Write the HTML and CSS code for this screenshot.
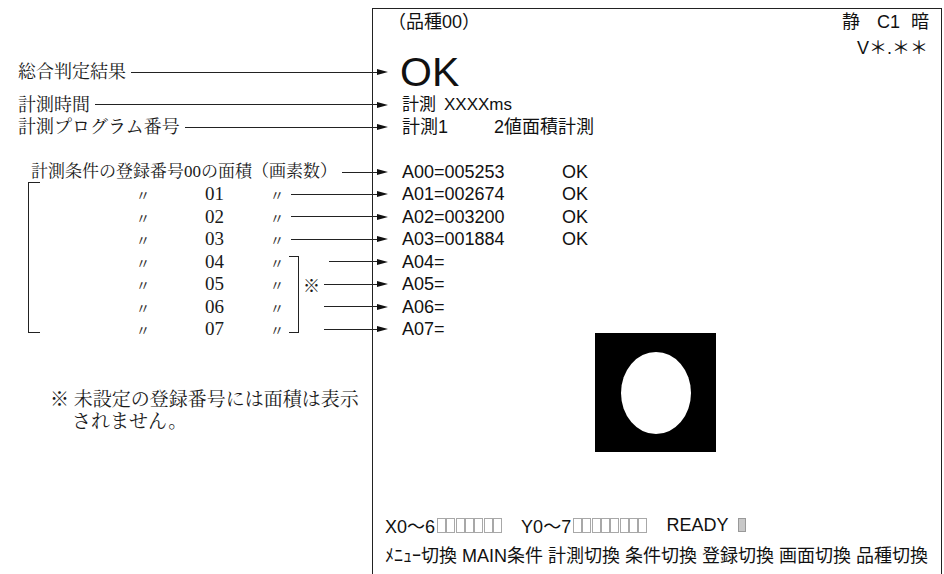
FILE: index.html
```html
<!DOCTYPE html>
<html lang="ja">
<head>
<meta charset="utf-8">
<title>計測画面</title>
<link rel="stylesheet" href="styles.css">
</head>
<body>
<div class="page">
  <div class="notes">
    <div class="lrow r-ok"><span>総合判定結果</span><i class="lead"></i></div>
    <div class="lrow r-time"><span>計測時間</span><i class="lead"></i></div>
    <div class="lrow r-prog"><span>計測プログラム番号</span><i class="lead"></i></div>
    <div class="lrow r-a00"><span>計測条件の登録番号00の面積（画素数）</span><i class="lead"></i></div>
    <div class="grp">
      <div class="crow"><span class="dit">〃</span><span class="num">01</span><span class="dit">〃</span><span class="tail"><i class="lead"></i></span></div>
      <div class="crow"><span class="dit">〃</span><span class="num">02</span><span class="dit">〃</span><span class="tail"><i class="lead"></i></span></div>
      <div class="crow"><span class="dit">〃</span><span class="num">03</span><span class="dit">〃</span><span class="tail"><i class="lead"></i></span></div>
      <div class="grp2">
        <div class="crow"><span class="dit">〃</span><span class="num">04</span><span class="dit">〃</span><span class="tail t04"><i class="lead"></i></span></div>
        <div class="crow"><span class="dit">〃</span><span class="num">05</span><span class="dit">〃</span><span class="tail t05"><span class="kome">※</span><i class="lead"></i></span></div>
        <div class="crow"><span class="dit">〃</span><span class="num">06</span><span class="dit">〃</span><span class="tail t06"><i class="lead"></i></span></div>
        <div class="crow"><span class="dit">〃</span><span class="num">07</span><span class="dit">〃</span><span class="tail t06"><i class="lead"></i></span></div>
      </div>
    </div>
    <p class="foot">※ 未設定の登録番号には面積は表示<br><span class="foot2">されません。</span></p>
  </div>

  <div class="screen">
    <div class="srow hdr"><span class="kind">（品種00）</span><span class="mode"><span>静</span><span class="c1">C1</span><span class="dark">暗</span></span></div>
    <div class="srow hdr ver"><span>V＊.＊＊</span></div>
    <div class="srow s-ok"><i class="arr"></i><span class="big">OK</span></div>
    <div class="srow s-time"><i class="arr"></i><span>計測</span><span class="ms">XXXXms</span></div>
    <div class="srow s-prog"><i class="arr"></i><span class="pno">計測1</span><span>2値面積計測</span></div>
    <div class="srow s-a00"><i class="arr"></i><span class="val">A00=005253</span><span>OK</span></div>
    <div class="srow s-a"><i class="arr"></i><span class="val">A01=002674</span><span>OK</span></div>
    <div class="srow s-a"><i class="arr"></i><span class="val">A02=003200</span><span>OK</span></div>
    <div class="srow s-a"><i class="arr"></i><span class="val">A03=001884</span><span>OK</span></div>
    <div class="srow s-a"><i class="arr"></i><span class="val">A04=</span></div>
    <div class="srow s-a"><i class="arr"></i><span class="val">A05=</span></div>
    <div class="srow s-a"><i class="arr"></i><span class="val">A06=</span></div>
    <div class="srow s-a"><i class="arr"></i><span class="val">A07=</span></div>
    <div class="img"><div class="blob"></div></div>
    <div class="status">
      <span>X0〜6</span>
      <span class="boxes"><i></i><i></i><i></i><i></i><i></i><i></i><i></i></span>
      <span class="ylbl">Y0〜7</span>
      <span class="boxes"><i></i><i></i><i></i><i></i><i></i><i></i><i></i><i></i></span>
      <span class="ready">READY</span>
      <i class="led"></i>
    </div>
    <div class="menu">ﾒﾆｭｰ切換 MAIN条件 計測切換 条件切換 登録切換 画面切換 品種切換</div>
  </div>
</div>
</body>
</html>
```

FILE: styles.css
```css
* { box-sizing: border-box; margin: 0; padding: 0; }
html, body { width: 944px; height: 574px; overflow: hidden; background: #fff; }
body { color: #111; }

.page { display: flex; width: 944px; height: 574px; }

/* ---------- left annotation column ---------- */
.notes {
  width: 372px;
  flex: none;
  padding-top: 61px;
  font-family: "Liberation Serif", "Noto Serif CJK JP", "Noto Sans CJK JP", serif;
  font-size: 18px;
  color: #1a1a1a;
}
.lrow {
  display: flex;
  align-items: center;
  height: 22px;
  line-height: 22px;
  padding-left: 18px;
  white-space: nowrap;
}
.lead { display: block; flex: 1; height: 1px; background: #222; margin-left: 5px; }
.r-time { margin-top: 10px; height: 23px; }
.r-a00 { margin-top: 23px; padding-left: 31px; font-size: 17px; }

.grp { position: relative; }
.grp::before {
  content: "";
  position: absolute;
  left: 28px; top: -1px; bottom: 7.5px;
  width: 11px;
  border: 1px solid #222;
  border-right: none;
}
.grp2 { position: relative; }
.grp2::before {
  content: "";
  position: absolute;
  left: 289px; top: 5.5px; bottom: 7.5px;
  width: 9px;
  border: 1px solid #222;
  border-left: none;
}
.crow {
  display: grid;
  grid-template-columns: 69px 65px 21px 1fr;
  align-items: center;
  height: 22.5px;
  line-height: 22px;
  padding-left: 136px;
  white-space: nowrap;
}
.dit { font-family: "Noto Sans CJK JP", sans-serif; font-size: 14px; color: #333; }
.num { font-size: 19px; }
.tail { display: flex; align-items: center; height: 100%; }
.tail .lead { margin-left: 0; }
.t04 { padding-left: 38px; }
.t05 { padding-left: 12px; }
.t06 { padding-left: 33px; }
.kome { font-size: 17px; margin-right: 4px; margin-top: 5px; line-height: 17px; }

.foot {
  margin-top: 48px;
  padding-left: 50px;
  font-size: 19px;
  line-height: 22px;
  white-space: nowrap;
}
.foot2 { padding-left: 22px; }

/* ---------- right: the screen ---------- */
.screen {
  width: 570px;
  height: 566px;
  margin-top: 8px;
  flex: none;
  border: 1px solid #222;
  border-bottom: none;
  display: flex;
  flex-direction: column;
  font-family: "Liberation Sans", "Noto Sans CJK JP", sans-serif;
  font-size: 18px;
  color: #111;
  padding-bottom: 7px;
}
.srow {
  display: flex;
  align-items: center;
  height: 22px;
  line-height: 22px;
  white-space: nowrap;
  flex: none;
}
.hdr { height: 26px; justify-content: space-between; padding: 0 12px 0 15px; }
.ver { justify-content: flex-end; padding-right: 13px; }
.mode { display: flex; }
.c1 { margin-left: 17px; }
.dark { margin-left: 11px; }

.arr { display: flex; align-items: center; width: 15px; flex: none; margin-right: 14px; }
.arr::before { content: ""; width: 4px; height: 1px; background: #222; }
.arr::after {
  content: "";
  border-left: 11px solid #111;
  border-top: 3.5px solid transparent;
  border-bottom: 3.5px solid transparent;
}
.big { font-size: 41px; line-height: 22px; margin-left: -2px; }
.s-time { margin-top: 10px; height: 23px; font-size: 17px; }
.ms { margin-left: 8px; }
.pno { width: 92px; }
.s-a00 { margin-top: 23px; }
.s-a { height: 22.5px; }
.val { width: 160px; }

.img {
  width: 121px;
  height: 119px;
  margin-top: -7.5px;
  margin-left: 222px;
  background: #000;
  display: flex;
  align-items: center;
  justify-content: center;
  flex: none;
}
.blob { width: 70px; height: 82px; border-radius: 50%; background: #fff; }

.status {
  margin-top: auto;
  display: flex;
  align-items: center;
  height: 22px;
  padding-left: 12px;
  white-space: nowrap;
}
.boxes { display: flex; margin-left: 2px; }
.boxes i { display: block; width: 9px; height: 15px; border: 1px solid #a8a8a8; background: #fff; margin-right: 0.3px; }
.ylbl { margin-left: 19px; }
.ready { margin-left: 19px; }
.led { display: block; width: 8px; height: 14px; margin-left: 9px; background: #c8c8c8; border: 1px solid #999; }

.menu {
  margin-top: 9px;
  height: 22px;
  line-height: 22px;
  padding-left: 12px;
  white-space: nowrap;
}
```
